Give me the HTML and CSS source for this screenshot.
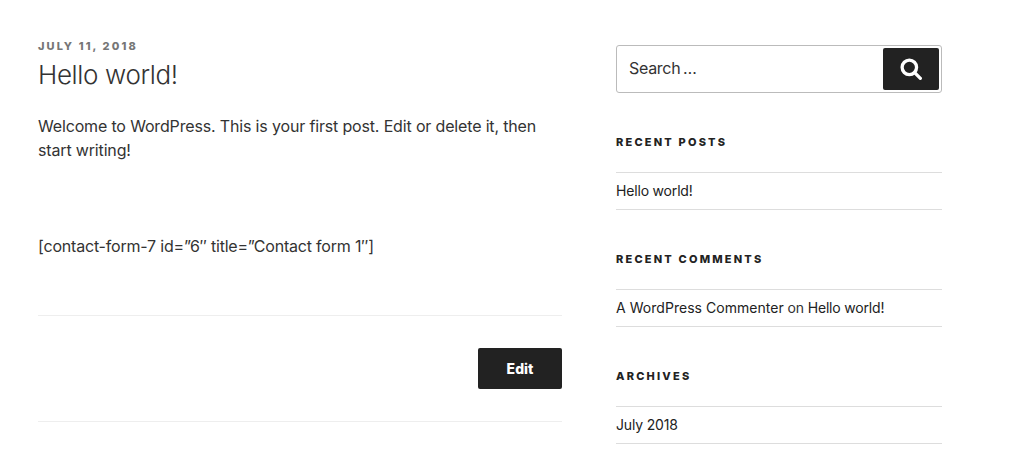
FILE: index.html
```html
<!DOCTYPE html>
<html lang="en">
<head>
<meta charset="utf-8">
<title>Hello world!</title>
<link rel="stylesheet" href="styles.css">
</head>
<body>
<div class="wrap">
  <main class="primary">
    <article class="post">
      <div class="post-date">July 11, 2018</div>
      <h1 class="post-title">Hello world!</h1>
      <p class="post-text">Welcome to WordPress. This is your first post. Edit or delete it, then start writing!</p>
      <p class="post-code">[contact-form-7 id=”6″ title=”Contact form 1″]</p>
    </article>
    <div class="edit-row"><a class="edit-btn" href="#">Edit</a></div>
  </main>
  <aside class="sidebar">
    <form class="search">
      <span class="search-label">Search …</span>
      <button class="search-btn" type="button" aria-label="Search">
        <svg class="search-icon" viewBox="0 0 24 24" aria-hidden="true"><circle cx="10.2" cy="10.2" r="7.9" fill="none" stroke="#fff" stroke-width="3.6"/><path d="M16 16l6.2 6.2" stroke="#fff" stroke-width="3.6" stroke-linecap="round"/></svg>
      </button>
    </form>
    <section class="widget">
      <h2 class="widget-title">Recent Posts</h2>
      <ul class="widget-list"><li><a href="#">Hello world!</a></li></ul>
    </section>
    <section class="widget">
      <h2 class="widget-title">Recent Comments</h2>
      <ul class="widget-list"><li><a class="comment-author" href="#">A WordPress Commenter</a> on <a href="#">Hello world!</a></li></ul>
    </section>
    <section class="widget">
      <h2 class="widget-title">Archives</h2>
      <ul class="widget-list"><li><a href="#">July 2018</a></li></ul>
    </section>
  </aside>
</div>
</body>
</html>
```
FILE: styles.css
```css
html, body { margin: 0; padding: 0; background: #fff; }
body {
  font-family: "Inter", "Liberation Sans", sans-serif;
  color: #333;
  overflow: hidden;
  height: 456px;
}
a { color: #222; text-decoration: none; }
.wrap {
  display: grid;
  grid-template-columns: 524px 326px;
  column-gap: 54px;
  padding: 39px 0 0 38px;
}
.post { border-bottom: 1px solid #eee; height: 276px; }
.post-date {
  font-size: 11px;
  font-weight: 800;
  line-height: 14px;
  letter-spacing: 2.1px;
  text-transform: uppercase;
  color: #767676;
}
.post-title {
  margin: 7px 0 0;
  font-size: 26px;
  font-weight: 300;
  line-height: 30px;
  letter-spacing: -0.35px;
  color: #333;
}
.post-text {
  margin: 24px 0 0;
  font-size: 16px;
  line-height: 24px;
  letter-spacing: -0.16px;
}
.post-code {
  margin: 72px 0 0;
  font-size: 16px;
  line-height: 24px;
  letter-spacing: -0.2px;
}
.edit-row {
  display: flex;
  justify-content: flex-end;
  padding: 32px 0;
  border-bottom: 1px solid #eee;
}
.edit-btn {
  display: block;
  width: 84px;
  height: 41px;
  line-height: 41px;
  text-align: center;
  background: #222;
  color: #fff;
  border-radius: 2px;
  font-size: 14px;
  font-weight: 800;
}
.sidebar { margin-top: 6px; }
.search {
  box-sizing: border-box;
  display: flex;
  align-items: center;
  justify-content: space-between;
  height: 48px;
  padding: 2px;
  border: 1px solid #bbb;
  border-radius: 3px;
}
.search-label {
  padding: 0 0 2px 10px;
  font-size: 16px;
  letter-spacing: -0.3px;
  word-spacing: -1.5px;
  color: #333;
}
.search-btn {
  display: flex;
  align-items: center;
  justify-content: center;
  width: 56px;
  height: 42px;
  padding: 0;
  border: 0;
  border-radius: 2px;
  background: #222;
}
.search-icon { width: 22px; height: 22px; }
.widget { padding-top: 42px; }
.widget-title {
  margin: 0;
  font-size: 11px;
  font-weight: 800;
  line-height: 14px;
  letter-spacing: 2.2px;
  text-transform: uppercase;
  color: #222;
}
.widget-list {
  list-style: none;
  margin: 23px 0 0;
  padding: 0;
  border-top: 1px solid #ddd;
}
.widget-list li {
  height: 36px;
  line-height: 36px;
  font-size: 14px;
  letter-spacing: -0.18px;
  border-bottom: 1px solid #ddd;
  color: #333;
}
.comment-author { letter-spacing: 0.04px; }
```
